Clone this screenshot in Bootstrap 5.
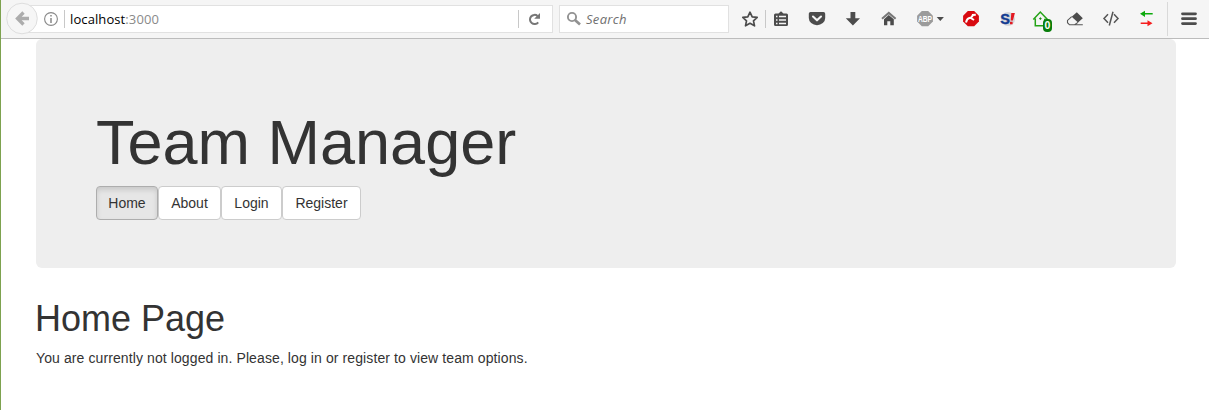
<!DOCTYPE html>
<html lang="en">
<head>
<meta charset="utf-8">
<meta name="viewport" content="width=device-width, initial-scale=1">
<title>Team Manager</title>
<link href="https://cdn.jsdelivr.net/npm/bootstrap@5.3.0/dist/css/bootstrap.min.css" rel="stylesheet">
<style>
body{font-family:"Liberation Sans",Arial,sans-serif;font-size:14px;line-height:20px;color:#333;background:#fff}
.window{min-height:410px;border-left:1px solid #7da24f;overflow:hidden}
.toolbar{height:39px;background:#f5f5f5;border-bottom:1px solid #bcbcbc;font-family:"Open Sans",sans-serif;font-size:13px}
.toolbar svg{display:block;flex:none;height:38px}
.back{width:34px;margin-left:4px;position:relative;z-index:1}
.field{height:28px;background:#fff;border:1px solid #e1e1e1}
.address{width:525px;margin-left:-11px;padding-left:11px;color:#000}
.url{padding-left:5px;letter-spacing:.1px}
.search{width:170px;margin-left:6px}
.rule{width:1px;height:18px;background:#c8c8c8}
.muted{color:#8a8a8a}
.hint{font-style:italic;color:#707070;letter-spacing:.3px}
.page-body{margin:0 33px 0 35px}
.hero{background:#eee;border-radius:6px;padding:69px 60px 48px;height:229px;margin-bottom:31px}
.hero h1{font-size:63px;line-height:69px;margin-bottom:9px;font-weight:400}
.page-title{font-size:36px;line-height:39.6px;margin:0 0 9px -1px;font-weight:400}
.notice{letter-spacing:.1px}
.tab-btn{--bs-btn-font-size:14px;--bs-btn-line-height:20px;--bs-btn-padding-x:0;--bs-btn-padding-y:6px;--bs-btn-border-radius:4px;--bs-btn-color:#333;--bs-btn-bg:#fff;--bs-btn-border-color:#ccc;--bs-btn-active-color:#333;--bs-btn-active-bg:#e6e6e6;--bs-btn-active-border-color:#adadad}
.tab-btn.active{box-shadow:inset 0 3px 5px rgba(0,0,0,.125)}
.tabs{display:grid;grid-template-columns:62px 63px 61px 79px}
</style>
</head>
<body>
<div class="window">
  <header class="toolbar d-flex align-items-center">
    <svg class="back" viewBox="5 0 34 38"><circle cx="22" cy="18.5" r="15.3" fill="#f6f6f6" stroke="#dedede"/><path d="M29 18.5H18M23.5 12.5L17.5 18.5L23.5 24.5" fill="none" stroke="#acacac" stroke-width="3.3"/></svg>
    <div class="field address d-flex align-items-center">
      <svg width="24" viewBox="40 0 24 38"><circle cx="51" cy="19" r="6.4" fill="none" stroke="#888" stroke-width="1.1"/><path d="M51 18v5M51 15v1.6" stroke="#888" stroke-width="1.5"/></svg>
      <span class="rule"></span>
      <span class="url flex-grow-1">localhost<span class="muted">:3000</span></span>
      <span class="rule"></span>
      <svg width="33" viewBox="519 0 33 38"><path d="M538.2 22.3A4.6 4.6 0 1 1 537.6 16" fill="none" stroke="#777" stroke-width="2"/><path d="M540 13v5.8h-5.8z" fill="#777"/></svg>
    </div>
    <div class="field search d-flex align-items-center">
      <svg width="26" viewBox="560 0 26 38"><circle cx="572" cy="17" r="4.1" fill="none" stroke="#929292" stroke-width="1.9"/><path d="M575 20l5 4.5" stroke="#929292" stroke-width="2.7"/></svg>
      <span class="hint">Search</span>
    </div>
    <svg width="36" viewBox="729 0 36 38"><path d="M750 12.2l2.2 4.6 5 .6-3.7 3.4 1 5-4.5-2.5-4.5 2.5 1-5-3.7-3.4 5-.6z" fill="none" stroke="#4c4c4c" stroke-width="1.7" stroke-linejoin="round"/></svg>
    <span class="rule"></span>
    <svg width="33" viewBox="766 0 33 38"><path d="M775.5 13.5h3l2.5-2.3 2.5 2.3h3q1.5 0 1.5 1.5v9.5q0 1.5-1.5 1.5h-11q-1.5 0-1.5-1.5V15q0-1.5 1.5-1.5z" fill="#4c4c4c"/><path d="M776 16.5h1.5M776 20h1.5M776 23.5h1.5M779 16.5h7M779 20h7M779 23.5h7" stroke="#f5f5f5" stroke-width="1.7"/></svg>
    <svg width="36" viewBox="799 0 36 38"><path d="M810.5 12h13q1.7 0 1.7 1.7v4.2a8.2 7.3 0 0 1-16.4 0v-4.2q0-1.7 1.7-1.7z" fill="#4c4c4c"/><path d="M813 16.5l4 3.8 4-3.8" fill="none" stroke="#f5f5f5" stroke-width="2.1" stroke-linecap="round" stroke-linejoin="round"/></svg>
    <svg width="36" viewBox="835 0 36 38"><path d="M850.5 12h4.8v6.2h4.7l-7.1 7.4-7.1-7.4h4.7z" fill="#4c4c4c"/></svg>
    <svg width="36" viewBox="871 0 36 38"><path d="M882 18.8l6.8-5.9 6.8 5.9" fill="none" stroke="#777" stroke-width="2"/><path d="M884 19.3l4.8-4.2 5 4.2v6h-3.5v-4h-3v4H884z" fill="#4c4c4c"/></svg>
    <svg width="46" viewBox="907 0 46 38"><path d="M921.8 11h6.4l4.7 4.7v5.8l-4.7 4.7h-6.4l-4.7-4.7v-5.8z" fill="#9b9b9b"/><text x="925" y="21.8" text-anchor="middle" font-family="Liberation Sans" font-size="8.5" font-weight="700" textLength="14" lengthAdjust="spacingAndGlyphs" fill="#fff">ABP</text><path d="M936.7 17h7.2l-3.6 4z" fill="#4c4c4c"/></svg>
    <svg width="36" viewBox="953 0 36 38"><path d="M967.8 11h6.4l4.7 4.7v5.8l-4.7 4.7h-6.4l-4.7-4.7v-5.8z" fill="#d80a10"/><path d="M966 22.5q1-4 3.5-4.4t3.3-3.1l3-.2M970 17.5l4 2.5" fill="none" stroke="#fff" stroke-width="2"/></svg>
    <svg width="34" viewBox="989 0 34 38"><circle cx="1008" cy="19" r="7" fill="#d5d5d9"/><text x="1000.3" y="24.2" font-family="Liberation Sans" font-size="14.5" font-weight="700" fill="#123b92" stroke="#123b92" stroke-width=".4">S</text><path d="M1011.3 13h3.6l-2 7.5h-2.2zM1010 21.8h2.6v2.4h-2.6z" fill="#e31921"/></svg>
    <svg width="34" viewBox="1023 0 34 38"><path d="M1033.3 19.5l7-7.5 7.2 7.5M1035.3 18.5v7.2h9.5v-7" fill="none" stroke="#24a316" stroke-width="1.5"/><path d="M1040.4 17.4v2.4M1039.2 18.6h2.4" stroke="#158b10"/><rect x="1043" y="19" width="9" height="13" rx="4" fill="#087e0b"/><text x="1047.5" y="29.2" text-anchor="middle" font-family="Liberation Sans" font-size="10.5" font-weight="700" fill="#fff">0</text></svg>
    <svg width="36" viewBox="1057 0 36 38"><path d="M1076.8 12.2l6 6-4.8 4.2-6.3-5.7z" fill="#4c4c4c"/><path d="M1071.7 16.7l-4.2 3.7v2.3l2 2.1h5.2l3.3-2.4M1069.5 24.8h13.3" fill="none" stroke="#555" stroke-width="1.1"/></svg>
    <svg width="36" viewBox="1093 0 36 38"><path d="M1108 14.3l-4 4.2 4 4.2M1114 14.3l4 4.2-4 4.2M1113 11.7l-3.7 13.8" fill="none" stroke="#555" stroke-width="1.5"/></svg>
    <svg width="38" viewBox="1129 0 38 38"><path d="M1140 13.8l5-3v2.3h7.7v1.5H1145v2.3z" fill="#0caa0c"/><path d="M1152.5 23.2l-5-3v2.3h-6.8v1.5h6.8v2.3z" fill="#f51d1d"/></svg>
    <svg width="1" viewBox="0 0 1 38"><path d="M0 2h1v34H0z" fill="#d9d9d9"/></svg>
    <svg width="41" viewBox="1168 0 41 38"><path d="M1182.5 13.8h13M1182.5 18.7h13M1182.5 23.6h13" stroke="#4c4c4c" stroke-width="2.8" stroke-linecap="round"/></svg>
  </header>
  <main class="page-body">
    <section class="hero">
      <h1>Team Manager</h1>
      <nav class="tabs">
        <button type="button" class="btn tab-btn active">Home</button>
        <button type="button" class="btn tab-btn">About</button>
        <button type="button" class="btn tab-btn">Login</button>
        <button type="button" class="btn tab-btn">Register</button>
      </nav>
    </section>
    <h2 class="page-title">Home Page</h2>
    <p class="notice mb-0">You are currently not logged in. Please, log in or register to view team options.</p>
  </main>
</div>
<script src="https://cdn.jsdelivr.net/npm/bootstrap@5.3.0/dist/js/bootstrap.bundle.min.js"></script>
</body>
</html>
